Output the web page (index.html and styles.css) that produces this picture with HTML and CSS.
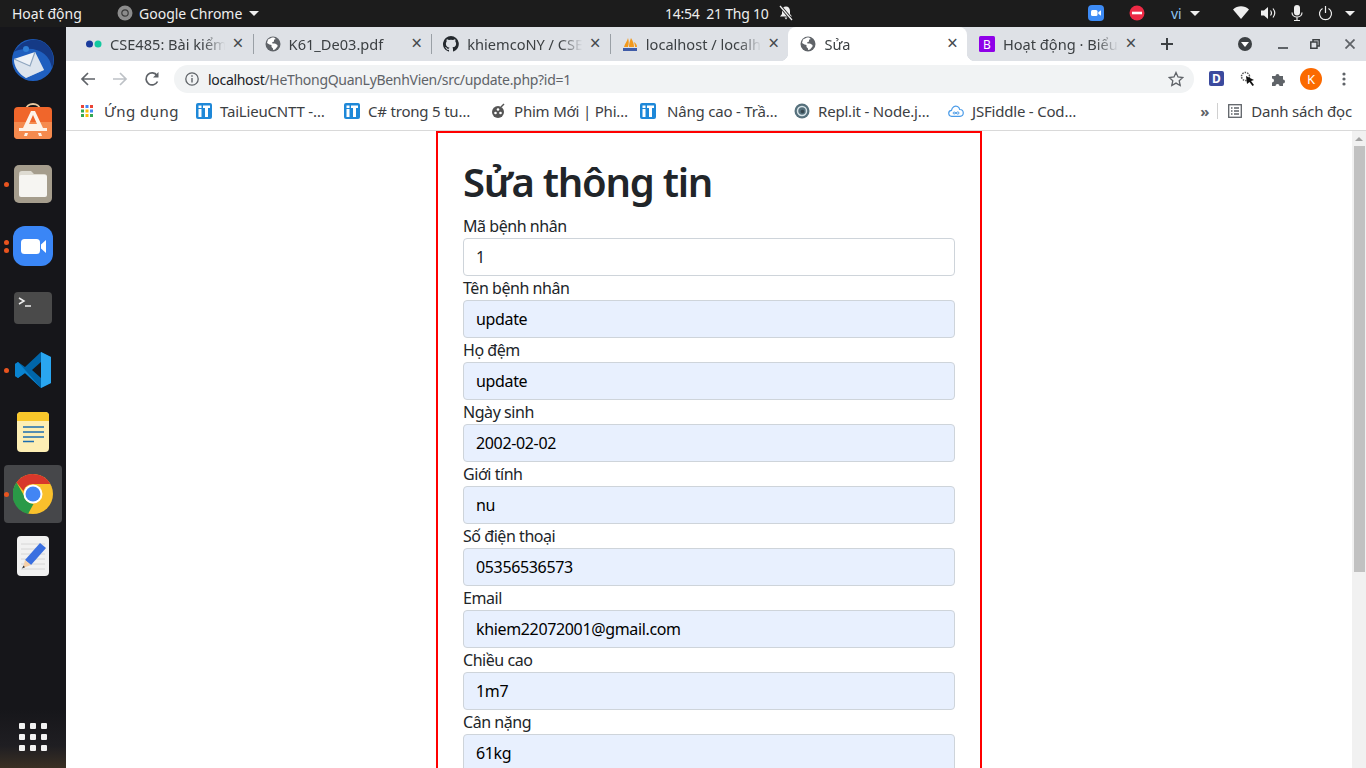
FILE: index.html
```html
<!DOCTYPE html>
<html lang="vi">

<head>
    <meta charset="UTF-8">
    <meta name="viewport" content="width=device-width, initial-scale=1.0">
    <title>Sửa</title>
    <link rel="stylesheet" href="styles.css">
</head>

<body>
    <svg class="defs" width="0" height="0">
        <symbol id="globe" viewBox="0 0 16 16">
            <circle cx="8" cy="8" r="7.5" fill="#5f6368" />
            <path fill="#fff" d="M7 1.5 3 3.5 2 7l2.500 1.500L6.500 9v2l1.500 1.500V14l2-.5 2.500-3V9L10 7.500H7.500L7 6.500l2-1V3.800L10.800 3 9 1.600z" />
        </symbol>
        <symbol id="it" viewBox="0 0 16 16">
            <rect width="16" height="16" rx="2" fill="#1e88d8" />
            <rect x="2.500" y="2.500" width="3" height="2.500" fill="#fff" />
            <rect x="2.500" y="6" width="3" height="8" fill="#fff" />
            <path fill="#fff" d="M7 2.500h7V5h-2v9H9V5H7z" />
        </symbol>
    </svg>

    <header class="topbar">
        <div class="top-left">
            <span class="activities">Hoạt động</span>
            <svg class="app-icon" width="16" height="16" viewBox="0 0 16 16">
                <circle cx="8" cy="8" r="7.500" fill="#8c8c8c" />
                <circle cx="8" cy="8" r="3.200" fill="none" stroke="#3a3a3a" stroke-width="1.200" />
            </svg>
            <span class="app-name">Google Chrome</span>
            <span class="caret"></span>
        </div>
        <div class="clock">
            <span>14:54&nbsp;&nbsp;21 Thg 10</span>
            <svg width="16" height="16" viewBox="0 0 16 16">
                <path fill="#eee" d="M8 1.500c2.500 0 4 1.800 4 4.500v3l2 2.500H2L4 9V6c0-2.700 1.500-4.500 4-4.500zM6.500 12.500h3L8 14.500z" />
                <path stroke="#1c1c1c" stroke-width="3" d="M2 1l12 14" />
                <path stroke="#eee" stroke-width="1.300" d="M2 1l12 14" />
            </svg>
        </div>
        <div class="top-right">
            <svg class="tray-zoom" width="16" height="16" viewBox="0 0 16 16">
                <rect width="16" height="16" rx="4" fill="#3d8bf5" />
                <rect x="3" y="5" width="6.500" height="6" rx="1.500" fill="#fff" />
                <path fill="#fff" d="M10.300 7.300 13 5.300v5.400l-2.700-2z" />
            </svg>
            <svg class="tray-dnd" width="16" height="16" viewBox="0 0 16 16">
                <circle cx="8" cy="8" r="7.500" fill="#ed2a45" />
                <rect x="3" y="6.700" width="10" height="2.600" fill="#fff" />
            </svg>
            <span class="lang">vi</span>
            <span class="caret"></span>
            <svg class="tray-wifi" width="16" height="14" viewBox="0 0 16 14">
                <path fill="#eee" d="M0 3.500C4.500-.8 11.500-.8 16 3.500L8 13z" />
            </svg>
            <svg class="tray-sound" width="16" height="14" viewBox="0 0 16 14">
                <path fill="#eee" d="M0 4.500h3L7 1v12L3 9.500H0z" />
                <path fill="none" stroke="#eee" stroke-width="1.200" d="M9.500 4.500c1.200 1.500 1.200 3.500 0 5M12 2.500c2.200 2.800 2.200 6.200 0 9" />
            </svg>
            <svg class="tray-mic" width="12" height="16" viewBox="0 0 12 16">
                <rect x="3" y="0" width="6" height="10.500" rx="3" fill="#eee" />
                <path fill="none" stroke="#eee" stroke-width="1.200" d="M1 7.500c0 6 10 6 10 0M6 12.500V16M3 15.500h6" />
            </svg>
            <svg class="tray-power" width="15" height="15" viewBox="0 0 15 15">
                <path fill="none" stroke="#eee" stroke-width="1.200" d="M4.500 2.500a6 6 0 1 0 6 0M7.500 0v7" />
            </svg>
            <span class="caret"></span>
        </div>
    </header>

    <div class="desktop">
        <nav class="dock">
            <div class="dock-item">
                <svg width="44" height="44" viewBox="0 0 44 44">
                    <circle cx="22" cy="22" r="21" fill="#1f5fbf" />
                    <path fill="#153a86" d="M8 8C17-1 33-1 40 12c3 6 3 13 1 18-2-13-13-21-28-19-4 .5-7 1-10 3 1-2 3-4 5-6z" />
                    <circle cx="15" cy="11" r="3" fill="#2f7fd6" />
                    <path fill="#eef2f7" d="M3 21l21-7 9 18-18 8C8 36 3 29 3 21z" />
                    <path fill="#c9d5e3" d="M3 21l16 7L24 14l9 18-18 8C8 36 3 29 3 21z" opacity=".5" />
                    <path fill="none" stroke="#8fa6bf" stroke-width="1.200" d="M3 21l16 7 5-14" />
                </svg>
            </div>
            <div class="dock-item">
                <svg width="40" height="40" viewBox="0 0 40 40">
                    <path fill="none" stroke="#e8c9a0" stroke-width="2" d="M13 8c0-8 14-8 14 0" />
                    <rect x="1" y="5" width="38" height="32" rx="4" fill="#f0662b" />
                    <path fill="#f58a4e" d="M1 20h38v13a4 4 0 0 1-4 4H5a4 4 0 0 1-4-4z" />
                    <path fill="#fdf3ea" d="M18 9h4l8 17h4v3H6v-3h4zM20 13l-4 9h8zM12 31h3l-1 3h-3zM25 31h3l1 3h-3z" />
                </svg>
            </div>
            <div class="dock-item dots-1">
                <svg width="40" height="40" viewBox="0 0 40 40">
                    <rect x="1" y="1" width="38" height="38" rx="5" fill="#a59d8d" />
                    <path fill="#dedbd2" d="M6 10a3 3 0 0 1 3-3h9l3 3h10a3 3 0 0 1 3 3v5H6z" />
                    <rect x="6" y="11" width="28" height="22" rx="2" fill="#f6f5f2" />
                </svg>
            </div>
            <div class="dock-item dots-2">
                <svg width="40" height="40" viewBox="0 0 40 40">
                    <rect width="40" height="40" rx="12" fill="#3a86f6" />
                    <rect x="8" y="13" width="19" height="15" rx="3.500" fill="#fff" />
                    <path fill="#fff" d="M28 18.500 33 14v13l-5-4.500z" />
                </svg>
            </div>
            <div class="dock-item">
                <svg width="40" height="34" viewBox="0 0 40 34">
                    <rect x="1" y="1" width="38" height="32" rx="4" fill="#4a4a4a" />
                    <path fill="none" stroke="#eee" stroke-width="1.500" d="M6 7l5 3-5 3" />
                    <path stroke="#eee" stroke-width="1.500" d="M12 15h6" />
                </svg>
            </div>
            <div class="dock-item dots-1">
                <svg width="38" height="38" viewBox="0 0 38 38">
                    <path fill="#0065a9" d="M27 1l10 5v26l-10 5-16-15-7 5-3-2v-12l3-2 7 5zM27 11l-9 8 9 8z" />
                    <path fill="#2aa6f0" d="M27 1l10 5v26l-10 5z" />
                    <path fill="#0a84d0" d="M1 13l3-2 23 26-16-15-7 5-3-2z" />
                </svg>
            </div>
            <div class="dock-item">
                <svg width="32" height="40" viewBox="0 0 32 40">
                    <rect width="32" height="40" rx="4" fill="#fdeeb4" />
                    <path fill="#f9c72a" d="M0 9V4a4 4 0 0 1 4-4h24a4 4 0 0 1 4 4v5z" />
                    <path stroke="#1c6db0" stroke-width="1.500" d="M6 15h21M6 20h21M6 25h21M6 29.500h11" />
                </svg>
            </div>
            <div class="dock-item dock-active dots-1">
                <svg width="40" height="40" viewBox="0 0 40 40">
                    <circle cx="20" cy="20" r="20" fill="#f9c02c" />
                    <path fill="#d8372b" d="M20 0a20 20 0 0 1 17.300 10H20a10 10 0 0 0-9.500 7L3.500 8.500A20 20 0 0 1 20 0z" />
                    <path fill="#2a9a47" d="M3.500 8.500 11 21.500a10 10 0 0 0 9.500 8.500L15 40A20 20 0 0 1 3.500 8.500z" />
                    <circle cx="20" cy="20" r="9.500" fill="#fff" />
                    <circle cx="20" cy="20" r="7.500" fill="#4285f4" />
                </svg>
            </div>
            <div class="dock-item">
                <svg width="32" height="40" viewBox="0 0 32 40">
                    <rect width="32" height="40" rx="4" fill="#f1f1f1" />
                    <path stroke="#d6d6d6" d="M4 8h24M4 13h24M4 18h24M4 23h24M4 28h24M4 33h24" />
                    <path fill="#3a6fe0" d="M23 7l6 5-15 17-6-5z" />
                    <path fill="#f5cfa8" d="M8 24l6 5-8 3z" />
                    <path fill="#333" d="M6.500 29.500l1.500 1.800-3 1.200z" />
                </svg>
            </div>
            <div class="dock-apps">
                <span></span><span></span><span></span>
                <span></span><span></span><span></span>
                <span></span><span></span><span></span>
            </div>
        </nav>

        <main class="chrome">
            <div class="tabstrip">
                <div class="tab">
                    <svg class="tab-icon" width="16" height="16" viewBox="0 0 16 16">
                        <circle cx="3.500" cy="8" r="3.500" fill="#1a3b9c" />
                        <circle cx="12" cy="8" r="3.500" fill="#12c9a0" />
                    </svg>
                    <span class="tab-title">CSE485: Bài kiểm</span>
                    <span class="tab-close">×</span>
                </div>
                <div class="tab">
                    <svg class="tab-icon" width="16" height="16"><use href="#globe" /></svg>
                    <span class="tab-title">K61_De03.pdf</span>
                    <span class="tab-close">×</span>
                </div>
                <div class="tab">
                    <svg class="tab-icon" width="16" height="16" viewBox="0 0 16 16">
                        <path fill="#24292e" d="M8 0a8 8 0 0 0-2.500 15.600c.4.100.5-.2.500-.4v-1.400c-2.200.5-2.700-1-2.700-1-.4-.9-.9-1.200-.9-1.200-.7-.5.100-.5.100-.5.800.100 1.200.8 1.200.8.700 1.200 1.900.9 2.300.7.100-.5.300-.9.500-1.100-1.800-.2-3.600-.9-3.600-4 0-.9.300-1.600.8-2.100-.1-.2-.4-1 .1-2.100 0 0 .7-.2 2.200.8a7.600 7.600 0 0 1 4 0c1.500-1 2.200-.8 2.200-.8.400 1.100.2 1.900.1 2.100.5.600.8 1.300.8 2.100 0 3.100-1.900 3.700-3.700 3.900.3.300.6.800.6 1.500v2.200c0 .2.100.5.600.4A8 8 0 0 0 8 0z" />
                    </svg>
                    <span class="tab-title">khiemcoNY / CSE</span>
                    <span class="tab-close">×</span>
                </div>
                <div class="tab">
                    <svg class="tab-icon" width="16" height="16" viewBox="0 0 16 16">
                        <path fill="#f39a1e" d="M2 11c1-4 3-5 4-9 1 3 1 6 0 9zM7 11c0-4 1-6 2-9 2 3 3 6 3 9zM13 11c0-2-.5-3-1-5 2 1 3 3 3 5z" />
                        <rect x="1" y="12" width="14" height="3" fill="#3f5ca8" />
                    </svg>
                    <span class="tab-title">localhost / localh</span>
                    <span class="tab-close">×</span>
                </div>
                <div class="tab tab-active">
                    <svg class="tab-icon" width="16" height="16"><use href="#globe" /></svg>
                    <span class="tab-title">Sửa</span>
                    <span class="tab-close">×</span>
                </div>
                <div class="tab">
                    <svg class="tab-icon" width="16" height="16" viewBox="0 0 16 16">
                        <rect width="16" height="16" rx="1.500" fill="#8f00e8" />
                        <text x="8" y="12.500" class="b-letter">B</text>
                    </svg>
                    <span class="tab-title">Hoạt động · Biểu</span>
                    <span class="tab-close">×</span>
                </div>
                <svg class="new-tab" width="14" height="14" viewBox="0 0 14 14">
                    <path stroke="#3c4043" stroke-width="2" d="M7 1v12M1 7h12" />
                </svg>
                <div class="win-controls">
                    <svg width="14" height="14" viewBox="0 0 14 14">
                        <circle cx="7" cy="7" r="7" fill="#3c4043" />
                        <path fill="#fff" d="M3 5h8l-4 5z" />
                    </svg>
                    <svg class="win-min" width="10" height="10" viewBox="0 0 10 10">
                        <rect y="8" width="10" height="2" fill="#5f6368" />
                    </svg>
                    <svg class="win-max" width="10" height="10" viewBox="0 0 10 10">
                        <path fill="none" stroke="#3c4043" stroke-width="1.500" d="M3 2.500V.8h6.200V7H7.500M.8 3h6.200v6.200H.8z" />
                    </svg>
                    <svg class="win-close" width="10" height="10" viewBox="0 0 10 10">
                        <path stroke="#5f6368" stroke-width="1.800" d="M.5.500l9 9M9.500.500l-9 9" />
                    </svg>
                </div>
            </div>

            <div class="toolbar">
                <svg class="nav-btn" width="16" height="16" viewBox="0 0 16 16">
                    <path fill="none" stroke="#5f6368" stroke-width="1.700" d="M15 8H2M8 2 2 8l6 6" />
                </svg>
                <svg class="nav-btn" width="16" height="16" viewBox="0 0 16 16">
                    <path fill="none" stroke="#bdc1c6" stroke-width="1.700" d="M1 8h13M8 2l6 6-6 6" />
                </svg>
                <svg class="nav-btn" width="16" height="16" viewBox="0 0 16 16">
                    <path fill="none" stroke="#5f6368" stroke-width="1.700" d="M13.500 10.500A6 6 0 1 1 13 4.500" />
                    <path fill="#5f6368" d="M14.500 1v5.500H9z" />
                </svg>
                <div class="omnibox">
                    <svg width="14" height="14" viewBox="0 0 14 14">
                        <circle cx="7" cy="7" r="6.200" fill="none" stroke="#5f6368" stroke-width="1.300" />
                        <path stroke="#5f6368" stroke-width="1.400" d="M7 6v4.500M7 3.200v1.500" />
                    </svg>
                    <span class="url"><b>localhost</b>/HeThongQuanLyBenhVien/src/update.php?id=1</span>
                    <svg class="star" width="16" height="16" viewBox="0 0 16 16">
                        <path fill="none" stroke="#5f6368" stroke-width="1.300" d="M8 1.500l2 4.500 4.800.5-3.600 3.200 1 4.800L8 12.100l-4.200 2.400 1-4.800L1.200 6.500 6 6z" />
                    </svg>
                </div>
                <div class="extensions">
                    <svg width="16" height="16" viewBox="0 0 16 16">
                        <rect width="15" height="15" rx="2" fill="#3b4a9e" />
                        <text x="7.500" y="12" class="d-letter">D</text>
                    </svg>
                    <svg width="16" height="16" viewBox="0 0 16 16">
                        <circle cx="5.500" cy="5.500" r="4" fill="none" stroke="#555" stroke-width="1.500" stroke-dasharray="1.500 1" />
                        <path fill="#111" d="M6 5l8 4-3 1 3 4-1.500 1-3-4L7 13z" />
                    </svg>
                    <svg width="16" height="16" viewBox="0 0 16 16">
                        <path fill="#5f6368" d="M1 5h3.500a2 2 0 1 1 4 0H12v3.500a2 2 0 1 1 0 4V15H8.500a2 2 0 1 0-4 0H1v-3.500a2 2 0 1 0 0-4z" />
                    </svg>
                    <span class="avatar">K</span>
                    <svg class="menu-dots" width="4" height="14" viewBox="0 0 4 14">
                        <circle cx="2" cy="2" r="1.600" fill="#5f6368" />
                        <circle cx="2" cy="7" r="1.600" fill="#5f6368" />
                        <circle cx="2" cy="12" r="1.600" fill="#5f6368" />
                    </svg>
                </div>
            </div>

            <div class="bookmarks">
                <div class="bm bm-apps">
                    <svg width="12" height="12" viewBox="0 0 12 12">
                        <rect width="3" height="3" fill="#ea4335" />
                        <rect x="4.500" width="3" height="3" fill="#4285f4" />
                        <rect x="9" width="3" height="3" fill="#ea4335" />
                        <rect y="4.500" width="3" height="3" fill="#34a853" />
                        <rect x="4.500" y="4.500" width="3" height="3" fill="#fbbc05" />
                        <rect x="9" y="4.500" width="3" height="3" fill="#4285f4" />
                        <rect y="9" width="3" height="3" fill="#34a853" />
                        <rect x="4.500" y="9" width="3" height="3" fill="#fbbc05" />
                        <rect x="9" y="9" width="3" height="3" fill="#34a853" />
                    </svg>
                    <span>Ứng dụng</span>
                </div>
                <div class="bm">
                    <svg width="16" height="16"><use href="#it" /></svg>
                    <span>TaiLieuCNTT -…</span>
                </div>
                <div class="bm">
                    <svg width="16" height="16"><use href="#it" /></svg>
                    <span>C# trong 5 tu…</span>
                </div>
                <div class="bm">
                    <svg width="16" height="16" viewBox="0 0 16 16">
                        <circle cx="8" cy="9" r="6" fill="#555" />
                        <circle cx="8" cy="6.500" r="1.300" fill="#fff" />
                        <circle cx="5.500" cy="10" r="1.300" fill="#fff" />
                        <circle cx="10.500" cy="10" r="1.300" fill="#fff" />
                        <path stroke="#555" stroke-width="1.500" d="M11 4l3-3" />
                    </svg>
                    <span>Phim Mới | Phi…</span>
                </div>
                <div class="bm">
                    <svg width="16" height="16"><use href="#it" /></svg>
                    <span>Nâng cao - Trầ…</span>
                </div>
                <div class="bm">
                    <svg width="16" height="16" viewBox="0 0 16 16">
                        <circle cx="8" cy="8" r="7.500" fill="#56707c" />
                        <circle cx="8" cy="8" r="4.500" fill="none" stroke="#d7e3e8" stroke-width="1.500" />
                        <circle cx="8.500" cy="8.500" r="1.800" fill="#37474f" />
                    </svg>
                    <span>Repl.it - Node.j…</span>
                </div>
                <div class="bm">
                    <svg width="16" height="12" viewBox="0 0 16 12">
                        <path fill="none" stroke="#4a9be8" stroke-width="1.200" d="M4 11.300a3 3 0 0 1-.5-6C4 2 7 .3 9.500 1.500c1.500.7 2 2 2.200 3a3.300 3.300 0 0 1 .3 6.800z" />
                        <path fill="none" stroke="#4a9be8" d="M8 8c-1-1.500-3-1-3 0s2 1.500 3 0 3-1.500 3 0-2 1.500-3 0z" />
                    </svg>
                    <span>JSFiddle - Cod…</span>
                </div>
                <div class="bm-right">
                    <span class="more">»</span>
                    <span class="bm-sep"></span>
                    <svg width="14" height="14" viewBox="0 0 14 14">
                        <rect x=".7" y=".7" width="12.600" height="12.600" fill="none" stroke="#5f6368" stroke-width="1.300" />
                        <path stroke="#5f6368" stroke-width="1.300" d="M3 4h1.500M6 4h5M3 7h1.500M6 7h5M3 10h1.500M6 10h5" />
                    </svg>
                    <span>Danh sách đọc</span>
                </div>
            </div>

            <div class="viewport">
                <div class="page">
                    <form class="edit-form">
                        <h1>Sửa thông tin</h1>
                        <label for="ma">Mã bệnh nhân</label>
                        <input id="ma" class="plain" type="text" value="1">
                        <label for="ten">Tên bệnh nhân</label>
                        <input id="ten" type="text" value="update">
                        <label for="ho">Họ đệm</label>
                        <input id="ho" type="text" value="update">
                        <label for="ns">Ngày sinh</label>
                        <input id="ns" type="text" value="2002-02-02">
                        <label for="gt">Giới tính</label>
                        <input id="gt" type="text" value="nu">
                        <label for="sdt">Số điện thoại</label>
                        <input id="sdt" type="text" value="05356536573">
                        <label for="email">Email</label>
                        <input id="email" type="text" value="khiem22072001@gmail.com">
                        <label for="cc">Chiều cao</label>
                        <input id="cc" type="text" value="1m7">
                        <label for="cn">Cân nặng</label>
                        <input id="cn" type="text" value="61kg">
                    </form>
                </div>
                <div class="scrollbar">
                    <span class="scroll-up"></span>
                    <span class="scroll-thumb"></span>
                </div>
            </div>
        </main>
    </div>
</body>

</html>
```

FILE: styles.css
```css
/* Basic Reset */
* {
    margin: 0;
    padding: 0;
    box-sizing: border-box;
}

html,
body {
    height: 768px;
    overflow: hidden;
}

body {
    font-family: 'Noto Sans', sans-serif;
    background: #fff;
    color: #212529;
}

svg {
    flex: none;
    display: block;
}

.defs {
    position: absolute;
}

/* Top bar */
.topbar {
    height: 27px;
    background: #1c1c1c;
    color: #eee;
    font-size: 14px;
    display: flex;
    align-items: center;
    padding: 0 0 1px 12px;
}

.top-left {
    width: 653px;
    display: flex;
    align-items: center;
}

.activities {
    width: 105px;
}

.app-name {
    margin-left: 6px;
    width: 110px;
}

.caret {
    width: 0;
    height: 0;
    border-left: 5px solid transparent;
    border-right: 5px solid transparent;
    border-top: 5px solid #eee;
}

.clock {
    display: flex;
    align-items: center;
    gap: 10px;
    width: 128px;
    white-space: nowrap;
    letter-spacing: -0.25px;
}

.top-right {
    margin-left: 295px;
    display: flex;
    align-items: center;
}

.tray-dnd {
    margin-left: 25px;
}

.lang {
    margin-left: 26px;
    width: 19px;
    color: #8fc4f0;
}

.tray-wifi {
    margin-left: 33px;
}

.tray-sound {
    margin-left: 12px;
}

.tray-mic {
    margin-left: 14px;
}

.tray-power {
    margin-left: 15px;
    margin-right: 12px;
}

/* Dock */
.desktop {
    display: flex;
    height: 741px;
}

.dock {
    width: 66px;
    flex: none;
    background: linear-gradient(#16161a 0, #16161a 92%, #1f1e22 97%, #3a3024 100%);
    display: flex;
    flex-direction: column;
    padding: 2px 4px 0;
}

.dock-item {
    height: 62px;
    display: flex;
    align-items: center;
    justify-content: center;
    border-radius: 4px;
    position: relative;
}

.dock-active {
    height: 58px;
    margin: 2px 0;
    background: #46474a;
}

.dots-1::before,
.dots-2::before,
.dots-2::after {
    content: "";
    position: absolute;
    left: 0;
    top: 50%;
    width: 5px;
    height: 5px;
    margin-top: -2px;
    border-radius: 50%;
    background: #e9541f;
}

.dots-2::before {
    margin-top: -6px;
}

.dots-2::after {
    margin-top: 2px;
}

.dock-apps {
    margin: auto 0 17px 0;
    padding-left: 15px;
    display: grid;
    grid-template-columns: repeat(3, 6px);
    gap: 5px;
}

.dock-apps span {
    height: 6px;
    border-radius: 1px;
    background: #f2f2f2;
}

/* Browser window */
.chrome {
    flex: 1;
    min-width: 0;
    display: flex;
    flex-direction: column;
}

.tabstrip {
    height: 34px;
    background: #dee1e6;
    padding-left: 8px;
    display: flex;
    align-items: stretch;
    font-size: 14.6px;
    color: #3c4043;
}

.tab {
    width: 178.6px;
    display: flex;
    align-items: center;
    padding: 0 0 1px 12px;
    position: relative;
}

.tab + .tab::before {
    content: "";
    position: absolute;
    left: 0;
    top: 7px;
    height: 20px;
    width: 1px;
    background: #9aa0a6;
}

.tab-active {
    background: #fff;
    border-radius: 8px 8px 0 0;
}

.tab-active::before,
.tab-active + .tab::before {
    display: none;
}

.tab-active::after {
    content: "";
    position: absolute;
    left: -8px;
    right: -8px;
    bottom: 0;
    height: 8px;
    background:
        radial-gradient(circle at 0 0, transparent 8px, #fff 8.500px) left bottom / 8px 8px no-repeat,
        radial-gradient(circle at 100% 0, transparent 8px, #fff 8.500px) right bottom / 8px 8px no-repeat;
}

.tab-icon {
    margin-right: 8px;
}

.tab-title {
    width: 119px;
    white-space: nowrap;
    overflow: hidden;
    -webkit-mask-image: linear-gradient(to right, #000 78%, transparent 97%);
    mask-image: linear-gradient(to right, #000 78%, transparent 97%);
}

.tab-close {
    width: 14px;
    margin-left: 2px;
    font-size: 19px;
    line-height: 1;
    text-align: center;
    color: #45494d;
}

.b-letter,
.d-letter {
    font-family: 'Noto Sans', sans-serif;
    font-size: 12px;
    fill: #fff;
    text-anchor: middle;
}

.d-letter {
    font-weight: 700;
}

.new-tab {
    align-self: center;
    margin-left: 14px;
}

.win-controls {
    display: flex;
    align-items: center;
    margin-left: 64px;
}

.win-min {
    margin-left: 26px;
}

.win-max {
    margin-left: 22px;
}

.win-close {
    margin-left: 25px;
}

.toolbar {
    height: 36px;
    display: flex;
    align-items: center;
    padding-left: 14px;
    background: #fff;
}

.nav-btn {
    margin-right: 16px;
}

.nav-btn:nth-child(3) {
    margin-right: 14px;
}

.omnibox {
    width: 1020px;
    height: 28px;
    border-radius: 14px;
    background: #f1f3f4;
    display: flex;
    align-items: center;
    padding: 0 10px 0 11px;
    font-size: 14px;
    color: #5f6368;
}

.url {
    margin-left: 9px;
    white-space: nowrap;
    letter-spacing: -0.3px;
}

.url b {
    font-weight: 400;
    color: #202124;
}

.star {
    margin-left: auto;
}

.extensions {
    display: flex;
    align-items: center;
    margin-left: 15px;
    gap: 15px;
}

.avatar {
    width: 22px;
    height: 22px;
    margin-left: -2px;
    border-radius: 50%;
    background: #fb6a00;
    color: #fff;
    font-size: 13px;
    line-height: 22px;
    text-align: center;
}

.menu-dots {
    margin-left: 5px;
}

.bookmarks {
    height: 34px;
    border-bottom: 1px solid #d9d9d9;
    display: flex;
    align-items: center;
    padding: 0 0 5px 15px;
    font-size: 15px;
    letter-spacing: -0.2px;
    color: #3c4043;
    white-space: nowrap;
}

.bm {
    flex: none;
    display: flex;
    align-items: center;
    gap: 8px;
    width: 154px;
}

.bm-apps {
    gap: 11px;
    width: 115px;
    letter-spacing: 0.5px;
}

.bm:nth-child(2) {
    width: 148px;
}

.bm:nth-child(3) {
    width: 146px;
}

.bm:nth-child(4) {
    width: 150px;
}

.bm:nth-child(5) {
    gap: 11px;
}

.bm-right {
    margin-left: auto;
    display: flex;
    align-items: center;
    padding-right: 14px;
}

.more {
    font-size: 15px;
    font-weight: 700;
    color: #5f6368;
    width: 14px;
    text-align: right;
}

.bm-sep {
    width: 1px;
    height: 16px;
    background: #d0d0d0;
    margin: 0 10px 0 8px;
}

.bm-right span:last-child {
    margin-left: 9px;
}

/* Page content */
.viewport {
    flex: 1;
    min-height: 0;
    display: flex;
}

.page {
    flex: 1;
    min-width: 0;
    overflow: hidden;
}

.edit-form {
    width: 546px;
    margin: 0 auto;
    border: 2px solid #f00;
    padding: 25px 25px 40px;
}

h1 {
    font-size: 40px;
    font-weight: 600;
    line-height: 48px;
    letter-spacing: -1.25px;
    margin-bottom: 8px;
}

label {
    display: block;
    font-size: 16px;
    line-height: 24px;
    letter-spacing: -0.45px;
}

input {
    display: block;
    width: 100%;
    height: 38px;
    padding: 6px 12px;
    border: 1px solid #ced4da;
    border-radius: 4px;
    background: #e8f0fe;
    color: #000;
    font: 400 16px/24px 'Noto Sans', sans-serif;
    letter-spacing: -0.35px;
}

input.plain {
    background: #fff;
    color: #212529;
}

.scrollbar {
    width: 14px;
    flex: none;
    background: #f1f1f1;
    display: flex;
    flex-direction: column;
    align-items: center;
}

.scroll-up {
    margin-top: 6px;
    width: 0;
    height: 0;
    border-left: 4px solid transparent;
    border-right: 4px solid transparent;
    border-bottom: 4px solid #a3a3a3;
}

.scroll-thumb {
    margin-top: 5px;
    width: 11px;
    height: 426px;
    background: #c1c1c1;
}
```
